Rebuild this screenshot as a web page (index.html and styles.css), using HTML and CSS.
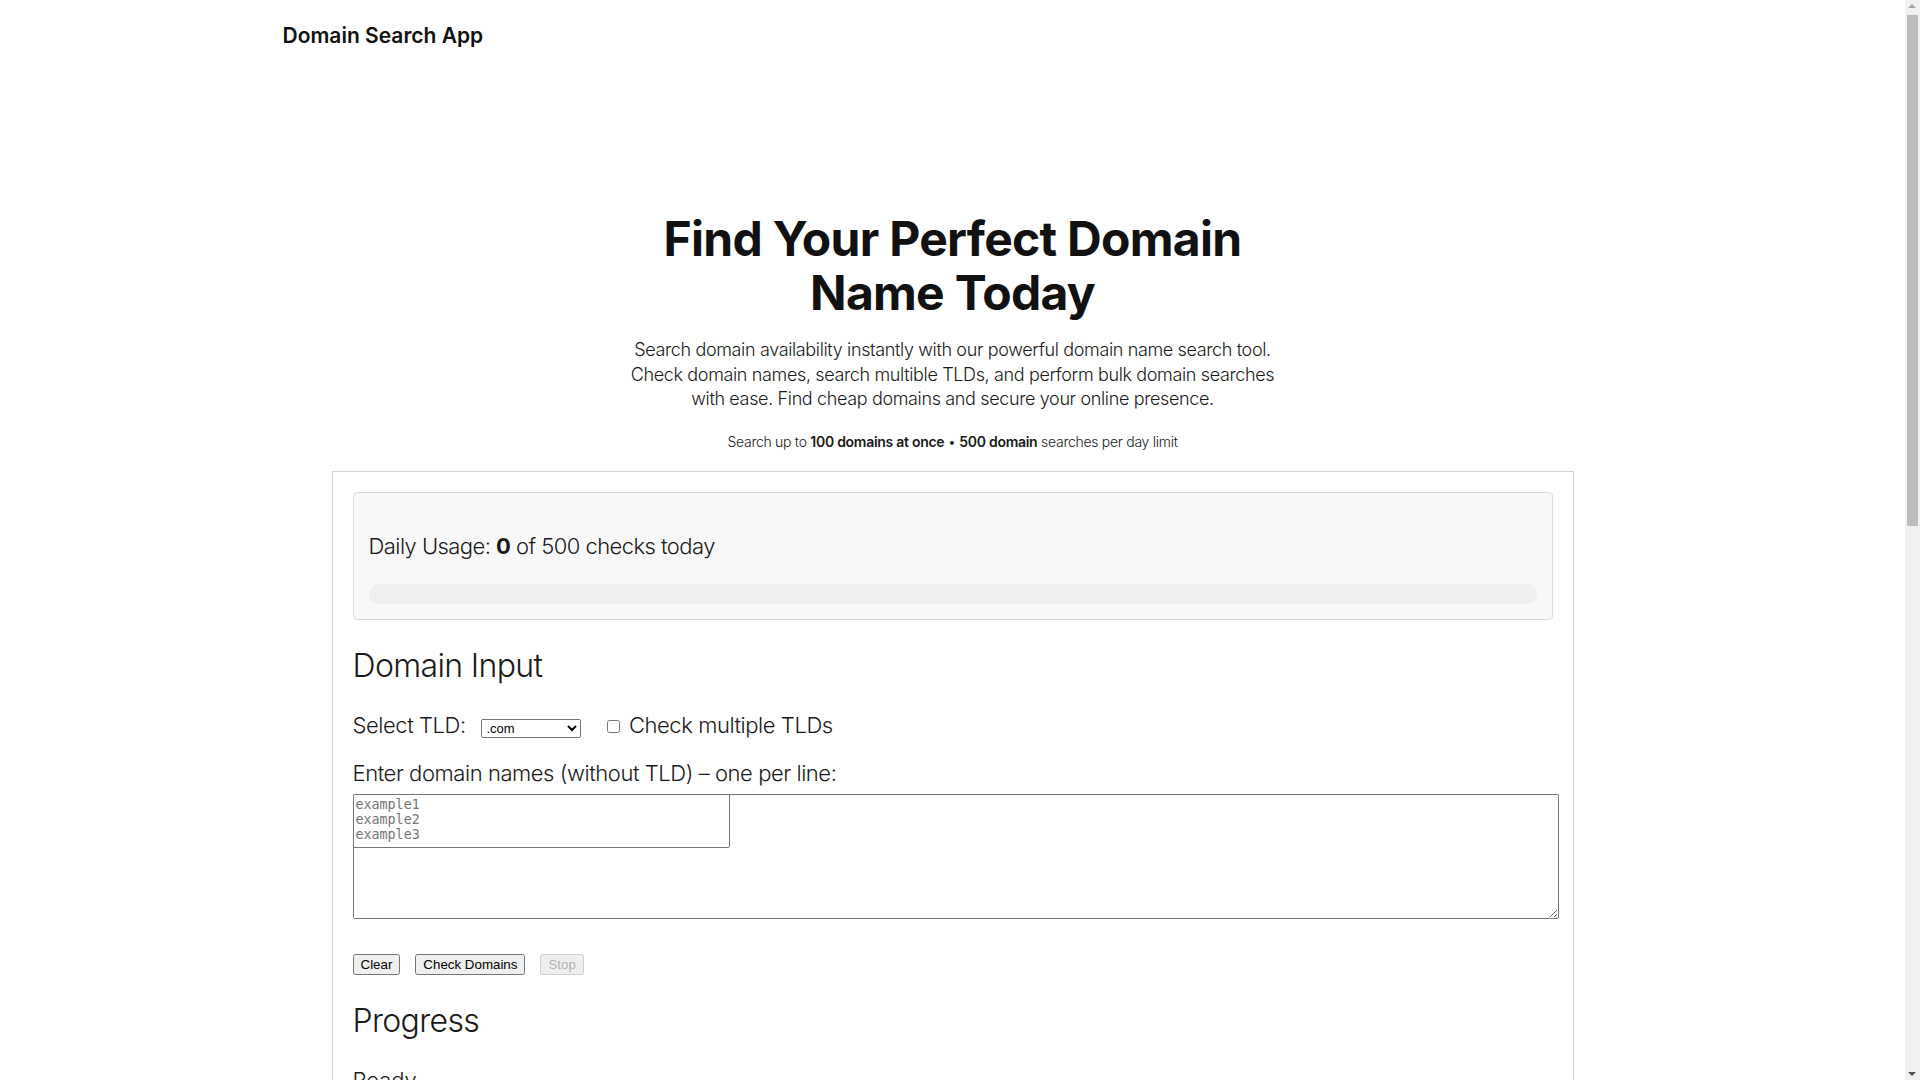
FILE: index.html
```html
<!DOCTYPE html>
<html>
<head>
  <title>Domain Search App</title>
  <link rel="stylesheet" href="styles.css">
</head>
<body>
  <header class="site-header">
    <div class="header-inner">
      <span class="brand">Domain Search App</span>
    </div>
  </header>

  <main>
    <section class="hero">
      <h1>Find Your Perfect Domain Name Today</h1>
      <p class="lead">Search domain availability instantly with our powerful domain name search tool. Check domain names, search multible TLDs, and perform bulk domain searches with ease. Find cheap domains and secure your online presence.</p>
      <p class="limits">Search up to <strong>100 domains at once</strong> &bull; <strong>500 domain</strong> searches per day limit</p>
    </section>

    <div class="card">
      <div class="usage">
        <p>Daily Usage: <strong>0</strong> of 500 checks today</p>
        <div class="usage-bar">
          <div class="usage-fill" style="width: 0%"></div>
        </div>
      </div>

      <h2>Domain Input</h2>
      <div class="tld-row">
        <label for="tld">Select TLD:</label>
        <select id="tld" class="tld-select">
          <option>.com</option>
          <option>.net</option>
          <option>.org</option>
          <option>.io</option>
          <option>.co</option>
        </select>
        <label class="multi"><input type="checkbox" id="multi-tld"> Check multiple TLDs</label>
      </div>

      <label class="domains-label" for="domains">Enter domain names (without TLD) &ndash; one per line:</label>
      <div class="domains-wrap">
        <textarea class="domains-box" aria-hidden="true"></textarea>
        <textarea id="domains" class="domains-input" placeholder="example1&#10;example2&#10;example3"></textarea>
      </div>

      <div class="actions">
        <button id="clear-button">Clear</button>
        <button id="check-button">Check Domains</button>
        <button id="stop-button" disabled>Stop</button>
      </div>

      <h2>Progress</h2>
      <p class="status">Ready</p>

      <h2>Results</h2>
      <div class="results">
        <p class="empty">No domains checked yet.</p>
      </div>
    </div>
  </main>

  <!-- classic scrollbar strip, the window reserves 15px for it -->
  <div class="scrollbar" aria-hidden="true">
    <div class="scrollbar-thumb"></div>
  </div>
</body>
</html>
```

FILE: styles.css
```css
body {
  margin: 0;
  padding-right: 15px;
  font-family: Inter, "Noto Sans", sans-serif;
  font-weight: 300;
  color: #1a1a1a;
  background-color: white;
}
.scrollbar {
  position: fixed;
  top: 0;
  right: 0;
  bottom: 0;
  width: 15px;
  background-color: #f1f1f1;
}
.scrollbar::before,
.scrollbar::after {
  content: "";
  position: absolute;
  left: 3px;
  border-left: 4.5px solid transparent;
  border-right: 4.5px solid transparent;
}
.scrollbar::before {
  top: 4px;
  border-bottom: 4px solid #a3a3a3;
}
.scrollbar::after {
  bottom: 4px;
  border-top: 4px solid #505050;
}
.scrollbar-thumb {
  position: absolute;
  top: 15px;
  left: 2px;
  right: 2px;
  height: 511px;
  background-color: #bdbdbd;
}
.site-header {
  padding: 24px 0;
}
.header-inner {
  max-width: 1340px;
  margin: 0 auto;
}
.brand {
  font-size: 21px;
  font-weight: 600;
  line-height: 24px;
  color: #111;
}
.hero {
  max-width: 640px;
  margin: 0 auto;
  padding-top: 140px;
  text-align: center;
}
h1 {
  font-size: 48px;
  line-height: 54px;
  font-weight: 700;
  color: #111;
  margin: 0;
  letter-spacing: -0.015em;
}
.lead {
  font-size: 18px;
  line-height: 24.5px;
  margin: 18px -20px 0;
  letter-spacing: -0.02em;
}
.limits {
  font-size: 14px;
  line-height: 17px;
  margin: 21px 0 21px;
  letter-spacing: -0.02em;
}
.limits strong {
  font-weight: 600;
}
.card {
  max-width: 1200px;
  margin: 0 auto;
  padding: 20px;
  border: 1px solid #d4d4d4;
}
.usage {
  background-color: #f8f8f8;
  border: 1px solid #dcdcdc;
  border-radius: 4px;
  padding: 15px;
}
.usage p {
  font-size: 22px;
  line-height: 32px;
  margin: 22px 0;
  letter-spacing: -0.025em;
}
.usage strong {
  font-weight: 700;
}
.usage-bar {
  height: 20px;
  background-color: #efefef;
  border-radius: 10px;
  overflow: hidden;
}
.usage-fill {
  height: 100%;
  background-color: #4A8C35;
}
h2 {
  font-size: 32px;
  line-height: 39px;
  font-weight: 300;
  margin: 26.5px 0;
  letter-spacing: -0.02em;
}
.tld-row {
  font-size: 22px;
  letter-spacing: -0.02em;
}
.tld-select {
  width: 100px;
  margin-left: 10px;
  font-size: 13px;
  letter-spacing: 0;
}
.multi {
  margin-left: 16px;
}
.domains-label {
  display: block;
  font-size: 22px;
  margin-top: 22px;
  letter-spacing: -0.02em;
}
.domains-wrap {
  position: relative;
  margin-top: 8px;
}
.domains-box {
  display: block;
  width: 100%;
  height: 119px;
  margin: 0;
}
.domains-input {
  position: absolute;
  top: 0;
  left: 0;
  width: 371px;
  height: 48px;
  margin: 0;
  resize: none;
}
.actions {
  display: flex;
  gap: 15px;
  margin-top: 35px;
}
.status {
  font-size: 22px;
  margin: 0 0 22px;
}
.results {
  min-height: 990px;
}
.empty {
  color: #777;
}
```
